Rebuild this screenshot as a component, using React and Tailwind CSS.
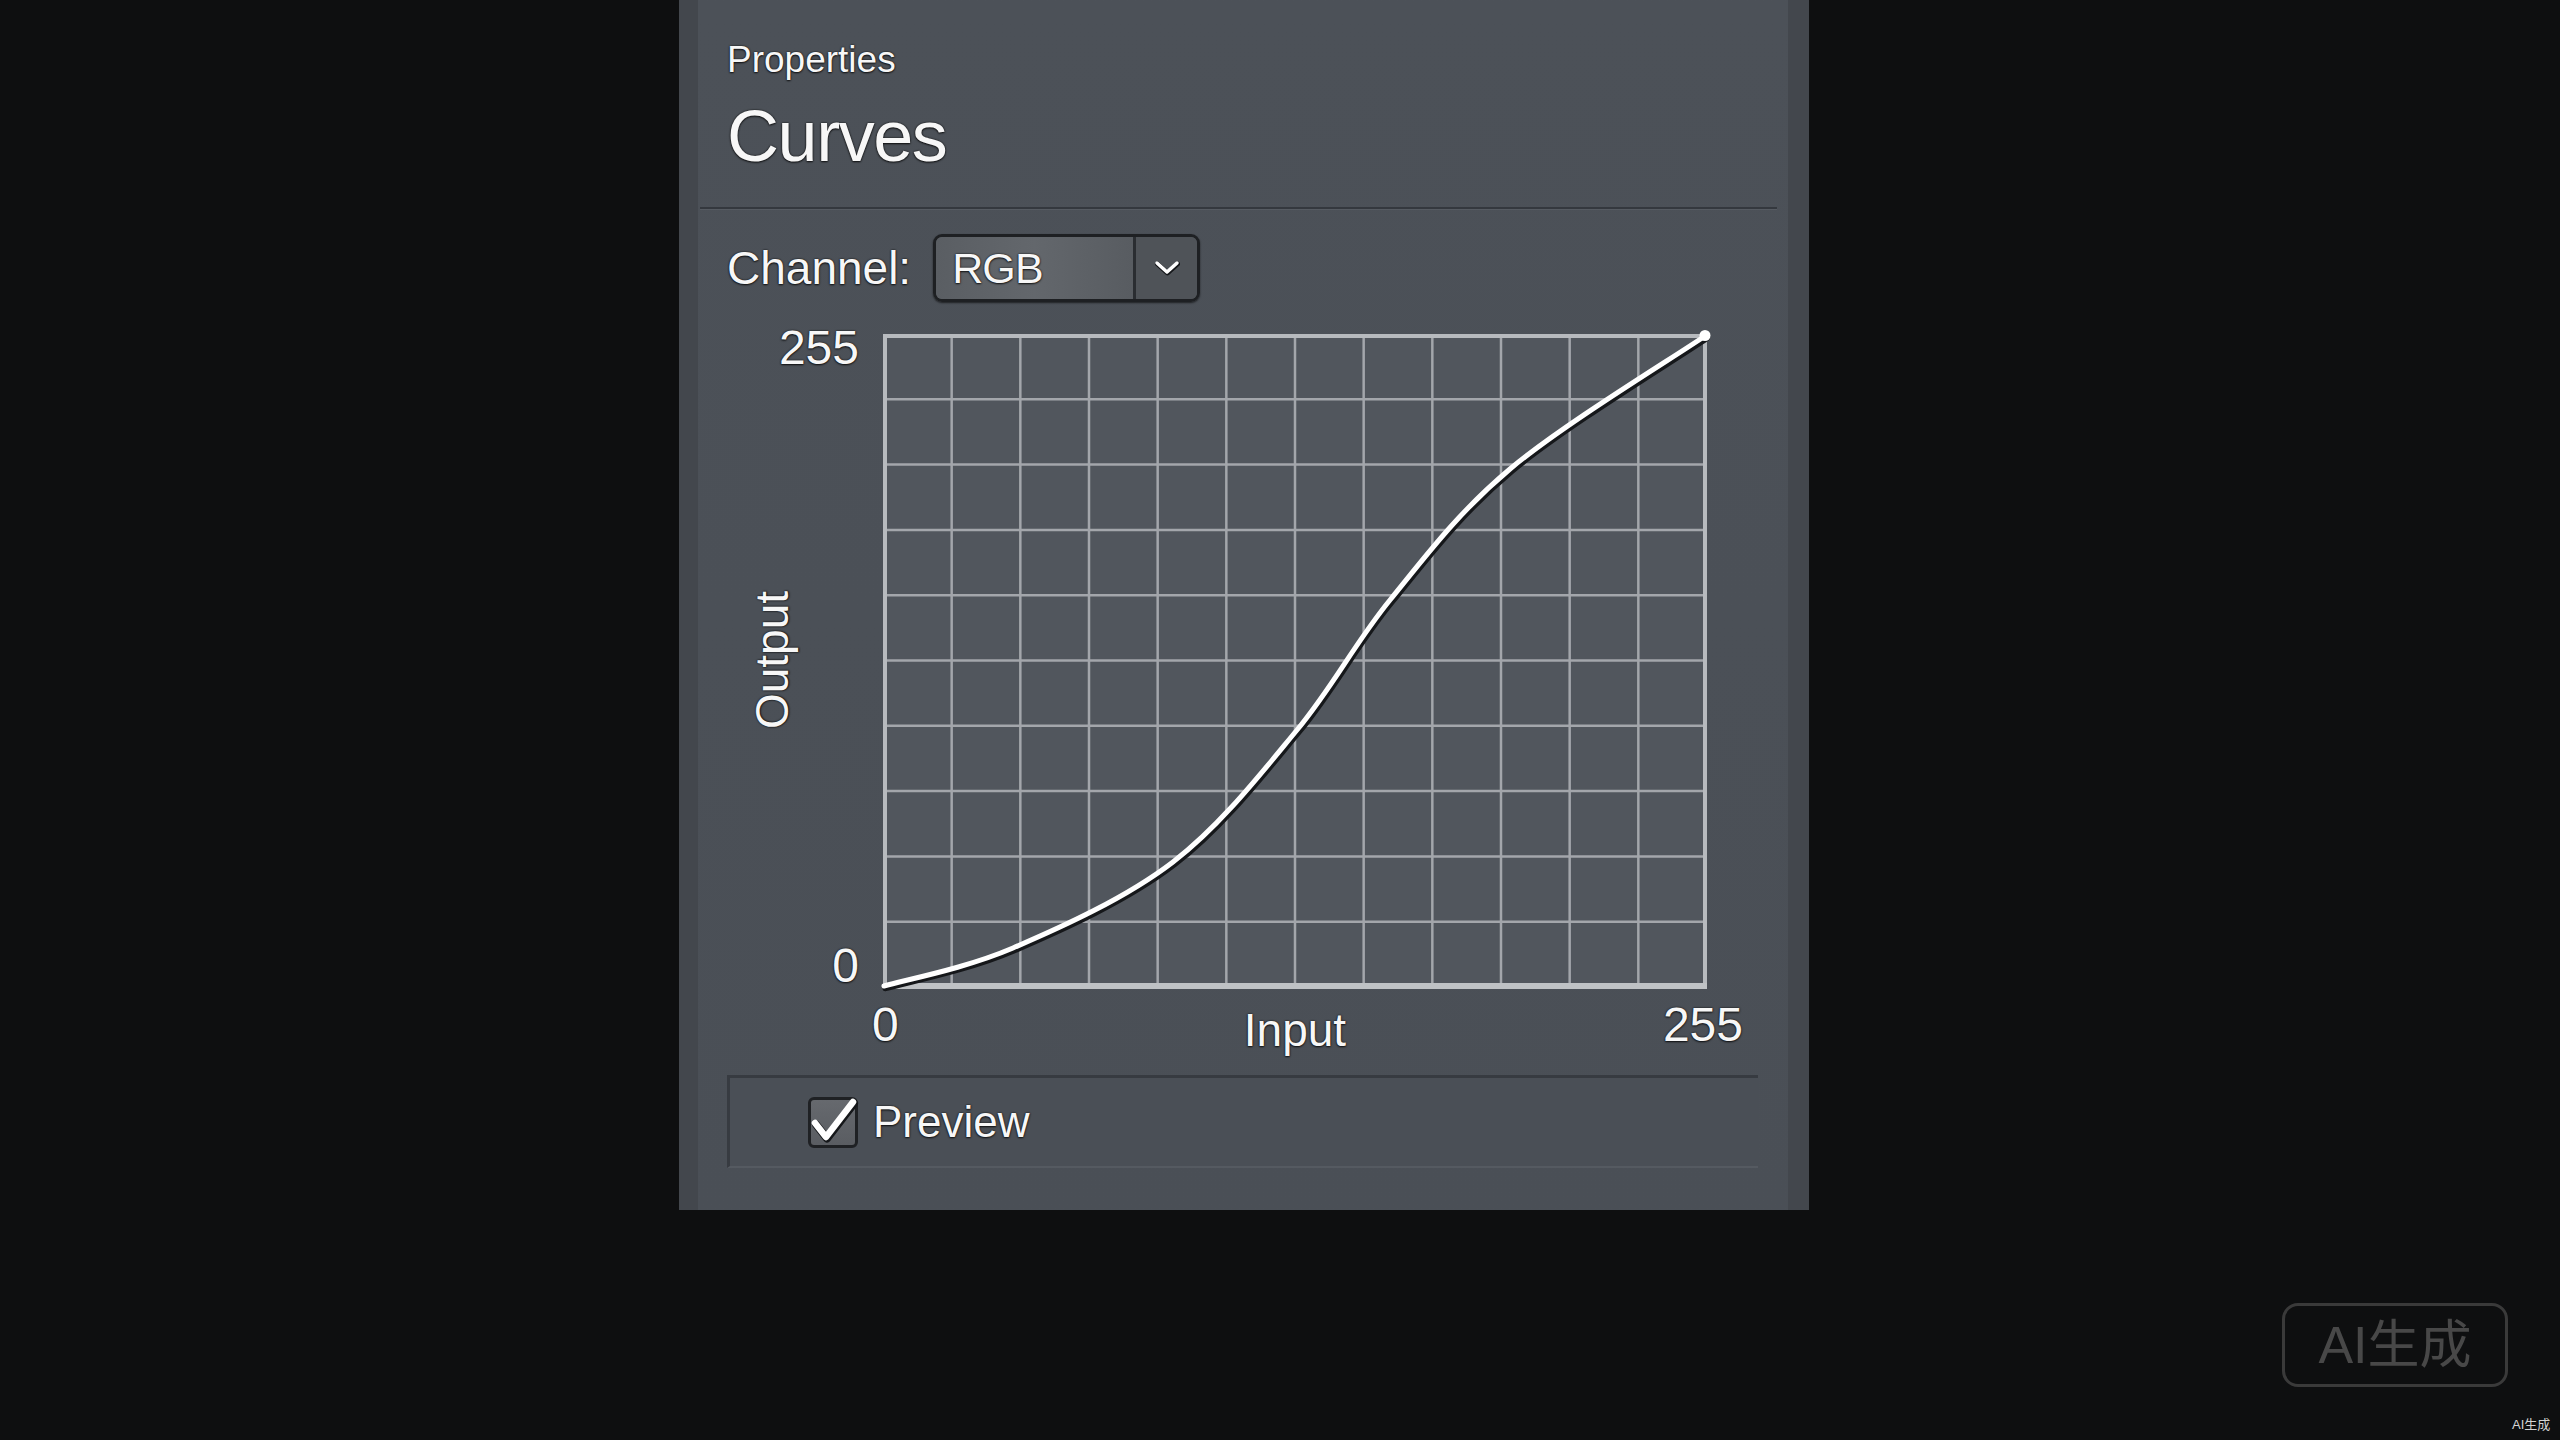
import React from "react";

const PTS = [
  [1, 652], [130, 614], [290, 528], [414, 396], [507, 266], [627, 135], [822, 2],
];

function catmull(p) {
  let d = `M${p[0][0]},${p[0][1]}`;
  for (let i = 0; i < p.length - 1; i++) {
    const p0 = p[i - 1] || p[i];
    const p1 = p[i];
    const p2 = p[i + 1];
    const p3 = p[i + 2] || p2;
    const c1 = [p1[0] + (p2[0] - p0[0]) / 6, p1[1] + (p2[1] - p0[1]) / 6];
    const c2 = [p2[0] - (p3[0] - p1[0]) / 6, p2[1] - (p3[1] - p1[1]) / 6];
    d += ` C${c1[0].toFixed(1)},${c1[1].toFixed(1)} ${c2[0].toFixed(1)},${c2[1].toFixed(1)} ${p2[0]},${p2[1]}`;
  }
  return d;
}

const CURVE = catmull(PTS);
const W = 824;
const H = 653;

function Plot() {
  const vx = Array.from({ length: 11 }, (_, i) => ((i + 1) * W) / 12);
  const hy = Array.from({ length: 9 }, (_, i) => ((i + 1) * H) / 10);
  return (
    <svg width={W} height={H} viewBox={`0 0 ${W} ${H}`} className="block overflow-visible">
      <rect x="0" y="0" width={W} height={H} fill="#51565d" />
      {vx.map((x) => (
        <line key={"v" + x} x1={x} y1="0" x2={x} y2={H} stroke="#a3a6ab" strokeWidth="2.5" />
      ))}
      {hy.map((y) => (
        <line key={"h" + y} x1="0" y1={y} x2={W} y2={y} stroke="#a3a6ab" strokeWidth="2.5" />
      ))}
      <rect x="2" y="2" width={W - 4} height={H - 4} fill="none" stroke="#b7babe" strokeWidth="4" />
      <line x1="0" y1={H - 1} x2={W} y2={H - 1} stroke="#bfc2c5" strokeWidth="6" />
      <path d={CURVE} fill="none" stroke="#15171a" strokeWidth="6.5" strokeLinecap="round" transform="translate(1.5,2)" />
      <path d={CURVE} fill="none" stroke="#ffffff" strokeWidth="5" strokeLinecap="round" />
      <circle cx="822" cy="1.5" r="5.5" fill="#ffffff" />
    </svg>
  );
}

const shadow = "[text-shadow:0_0_2px_rgba(0,0,0,0.9),0_1px_2px_rgba(0,0,0,0.7)]";

export default function App() {
  return (
    <div
      className="relative w-[2560px] h-[1440px] overflow-hidden bg-[#0e0f10] flex items-start"
      style={{ fontFamily: '"Liberation Sans", Arial, sans-serif' }}
    >
      <div className="ml-[679px] w-[1130px] h-[1210px] bg-[#43474d] flex pl-[19px] pr-[21px]">
        <div className="flex-1 bg-gradient-to-b from-[#4c5158] to-[#4a4f56] flex flex-col text-[#f7f7f7]">
          {/* Header */}
          <div className="pl-[29px] pt-[41px]">
            <div className={`text-[37px] leading-none ${shadow}`}>Properties</div>
            <div className={`mt-[22px] text-[72px] leading-none tracking-[-0.02em] ${shadow}`}>Curves</div>
          </div>
          <div className="mt-[35px] ml-[2px] mr-[11px] h-[3px] bg-[#34383e] border-b border-[#565b62]" />

          {/* Channel row */}
          <div className="mt-[24px] pl-[29px] h-[68px] flex items-center">
            <span className={`text-[46px] leading-none ${shadow}`}>Channel:</span>
            <div className="ml-[22px] w-[267px] h-[68px] rounded-[9px] border-[3px] border-[#1e2023] flex overflow-hidden shadow-[0_1px_2px_rgba(0,0,0,0.6)]">
              <div className="flex-1 bg-gradient-to-r from-[#5a5e63] via-[#63676c] to-[#585c61] flex items-center pl-[16px]">
                <span className={`text-[43px] leading-none tracking-[-0.02em] ${shadow}`}>RGB</span>
              </div>
              <div className="w-[64px] border-l-[3px] border-[#2a2d31] bg-[#4f5358] flex items-center justify-center">
                <svg width="26" height="16" viewBox="0 0 26 16">
                  <polyline points="3,3 13,12 23,3" fill="none" stroke="#15171a" strokeWidth="5" strokeLinecap="round" strokeLinejoin="round" transform="translate(0.5,1)" />
                  <polyline points="3,3 13,12 23,3" fill="none" stroke="#ffffff" strokeWidth="3.5" strokeLinecap="round" strokeLinejoin="round" />
                </svg>
              </div>
            </div>
          </div>

          {/* Chart row */}
          <div className="mt-[32px] h-[653px] flex">
            <div className="ml-[51px] w-[46px] flex items-center justify-center">
              <span className={`text-[46px] leading-none [writing-mode:vertical-rl] rotate-180 ${shadow}`}>Output</span>
            </div>
            <div className="w-[64px] flex flex-col justify-between items-end">
              <span className={`-mt-[10px] text-[48px] leading-none ${shadow}`}>255</span>
              <span className={`-mb-[3px] text-[48px] leading-none ${shadow}`}>0</span>
            </div>
            <div className="ml-[24px]">
              <Plot />
            </div>
          </div>

          {/* X labels */}
          <div className="mt-[14px] ml-[185px] w-[824px] grid grid-cols-[1fr_auto_1fr] items-start">
            <span className={`-ml-[11px] justify-self-start text-[48px] leading-none ${shadow}`}>0</span>
            <span className={`mt-[6px] text-[46px] leading-none ${shadow}`}>Input</span>
            <span className={`-mr-[36px] justify-self-end text-[48px] leading-none ${shadow}`}>255</span>
          </div>

          {/* Preview box */}
          <div className="mt-[22px] ml-[29px] mr-[30px] h-[93px] border-t-[3px] border-l-[3px] border-[#373b41] border-b-2 border-b-[#555a61] bg-[#4a4f56] flex items-center pl-[78px]">
            <div className="relative w-[50px] h-[51px] rounded-[6px] border-[3px] border-[#1f2124] bg-gradient-to-b from-[#66696e] to-[#5a5d62]">
              <svg className="absolute -left-[3px] -top-[3px] overflow-visible" width="50" height="51" viewBox="0 0 50 51">
                <path d="M7 26 L18 40 L45 5" fill="none" stroke="#15171a" strokeWidth="8" strokeLinecap="round" strokeLinejoin="round" transform="translate(1,1.5)" />
                <path d="M7 26 L18 40 L45 5" fill="none" stroke="#ffffff" strokeWidth="6.5" strokeLinecap="round" strokeLinejoin="round" />
              </svg>
            </div>
            <span className={`ml-[15px] text-[44px] leading-none ${shadow}`}>Preview</span>
          </div>
        </div>
      </div>

      {/* Watermark */}
      <div
        className="absolute left-[2282px] top-[1303px] w-[226px] h-[84px] rounded-[16px] border-[3px] border-[#3a3a3a] flex items-center justify-center text-[#484848] text-[52px] leading-none"
        style={{ fontFamily: '"Liberation Sans", "Noto Sans CJK SC", sans-serif' }}
      >
        AI生成
      </div>
      <div
        className="absolute left-[2512px] top-[1418px] text-[13px] leading-none text-[#d4d4d4]"
        style={{ fontFamily: '"Liberation Sans", "Noto Sans CJK SC", sans-serif' }}
      >
        AI生成
      </div>
    </div>
  );
}
